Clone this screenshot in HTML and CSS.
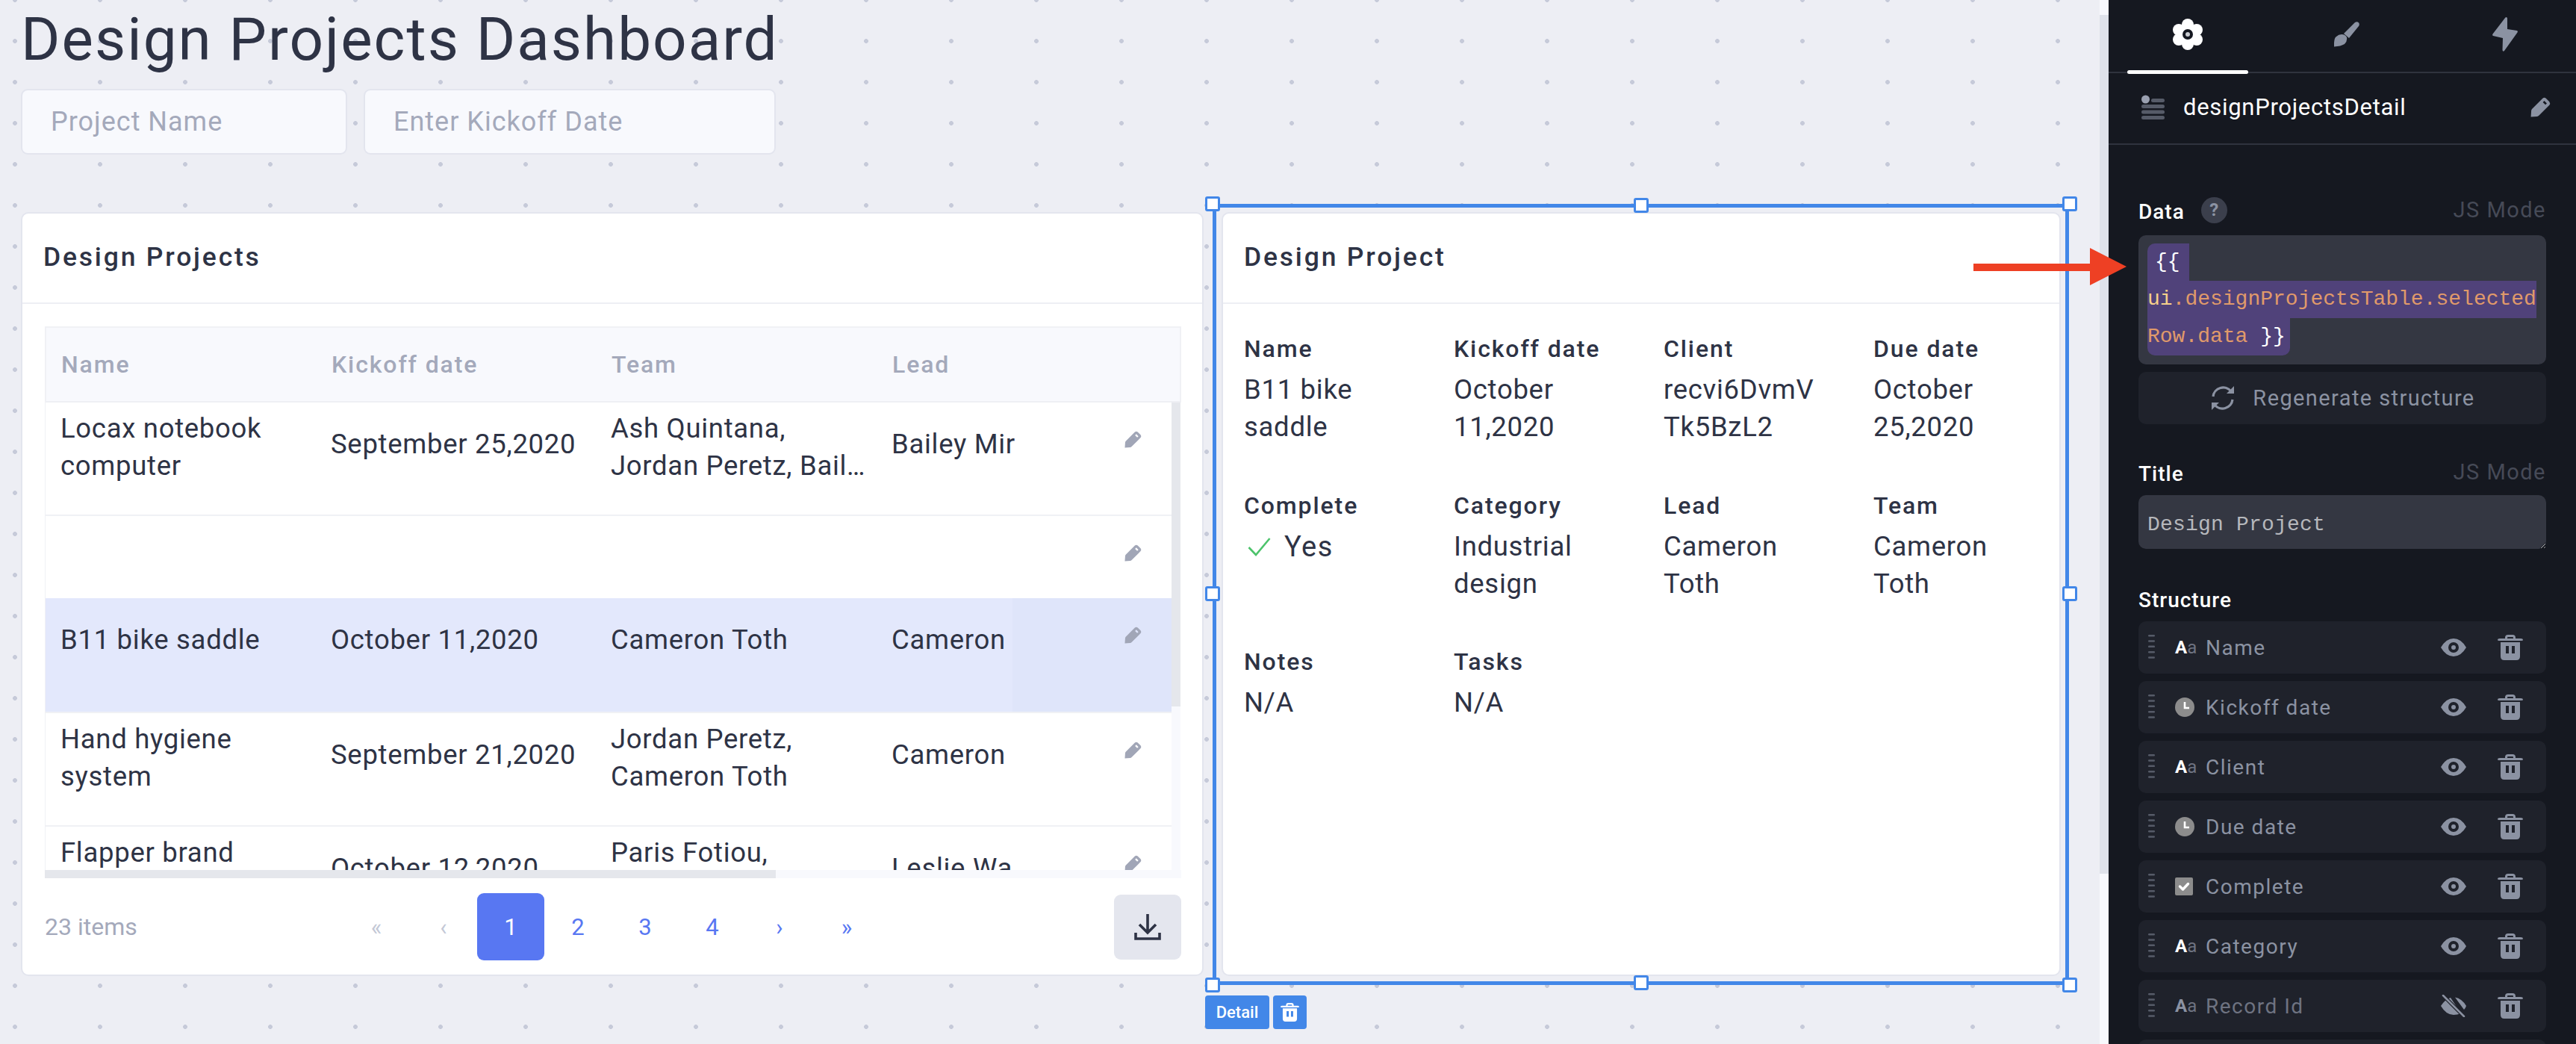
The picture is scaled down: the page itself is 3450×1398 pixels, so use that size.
FILE: index.html
```html
<!DOCTYPE html>
<html lang="en">
<head>
  <meta charset="UTF-8">
  <title>Design Projects Dashboard</title>
  <link rel="stylesheet" href="styles.css">
</head>
<body>

<svg class="defs" width="0" height="0">
  <symbol id="pencil" viewBox="0 0 24 24">
    <path fill-rule="evenodd" d="M0.5 23.5 L1 16 Q1 15 2 14 L14.5 1.5 Q16.5 0 18.5 1.5 L22.5 5.5 Q24 7.5 22.5 9.5 L10 22 Q9 23 8 23 Z M16.5 4.5 L14.8 6.2 L17.8 9.2 L19.5 7.5 Z"/>
  </symbol>
  <symbol id="trash" viewBox="0 0 34 34">
    <path fill-rule="evenodd" d="M10 5 V4 Q10 0 14 0 H20 Q24 0 24 4 V5 H31 Q34 5 34 7 Q34 8 32 8 H2 Q0 8 0 7 Q0 5 3 5 Z M13 5 H21 V4 Q21 3 20 3 H14 Q13 3 13 4 Z M4 10 H30 V29 Q30 34 25 34 H9 Q4 34 4 29 Z M11 15 V25 H15 V15 Z M19 15 V25 H23 V15 Z"/>
  </symbol>
  <symbol id="eye" viewBox="0 0 34 24">
    <path fill-rule="evenodd" d="M0 12 Q7 0 17 0 Q27 0 34 12 Q27 24 17 24 Q7 24 0 12 Z M17 5 A7 7 0 1 0 17 19 A7 7 0 1 0 17 5 Z M17 9 A3 3 0 1 1 17 15 A3 3 0 1 1 17 9 Z"/>
  </symbol>
  <symbol id="eye-off" viewBox="0 0 34 30">
    <path d="M0 15 Q6 6 13 4 L27 25 Q22 27 17 27 Q7 27 0 15 Z M19 3.500 Q28 5 34 15 Q33 18 31 20 Z"/>
    <path d="M3 1 L31 29" stroke="#1f222b" stroke-width="5"/>
    <path d="M3 1 L31 29" stroke="currentColor" stroke-width="2.500" stroke-linecap="round"/>
  </symbol>
  <symbol id="grip" viewBox="0 0 9 34">
    <rect x="0" y="0" width="9" height="2.500" rx="1.200"/>
    <rect x="0" y="7.300" width="9" height="2.500" rx="1.200"/>
    <rect x="0" y="14.600" width="9" height="2.500" rx="1.200"/>
    <rect x="0" y="21.900" width="9" height="2.500" rx="1.200"/>
    <rect x="0" y="29.200" width="9" height="2.500" rx="1.200"/>
  </symbol>
  <symbol id="clock" viewBox="0 0 26 26">
    <circle cx="13" cy="13" r="13" fill="#8c8c8c"/>
    <path d="M13 6 V14 H19" fill="none" stroke="#fff" stroke-width="2.600"/>
  </symbol>
  <symbol id="checkbox" viewBox="0 0 24 24">
    <rect width="24" height="24" rx="2" fill="#8c8c8c"/>
    <path d="M6.500 12 L10.500 16 L17.500 8.500" fill="none" stroke="#fff" stroke-width="3.400" stroke-linecap="round" stroke-linejoin="round"/>
  </symbol>
</svg>

<div class="app">
  <main class="canvas">
    <h1 class="page-title">Design Projects Dashboard</h1>
    <div class="filters">
      <input class="filter filter-name" placeholder="Project Name">
      <input class="filter filter-date" placeholder="Enter Kickoff Date">
    </div>

    <div class="cards">
      <!-- Table card -->
      <section class="card card-table">
        <div class="card-head"><h2>Design Projects</h2></div>
        <div class="card-body">
          <div class="table">
            <div class="row-grid table-head">
              <div class="cell">Name</div>
              <div class="cell">Kickoff date</div>
              <div class="cell">Team</div>
              <div class="cell">Lead</div>
            </div>
            <div class="table-scroll">
              <div class="rows">
                <div class="row-grid row row-tall">
                  <div class="cell">Locax notebook computer</div>
                  <div class="cell single">September 25,2020</div>
                  <div class="cell"><span class="line">Ash Quintana,</span><span class="line">Jordan Peretz, Bailey Mir</span></div>
                  <div class="cell single nowrap fits">Bailey Mir</div>
                  <div class="cell-edit"><svg class="icon-edit"><use href="#pencil"/></svg></div>
                </div>
                <div class="row-grid row row-empty">
                  <div class="cell"></div>
                  <div class="cell"></div>
                  <div class="cell"></div>
                  <div class="cell"></div>
                  <div class="cell-edit"><svg class="icon-edit"><use href="#pencil"/></svg></div>
                </div>
                <div class="row-grid row row-selected">
                  <div class="cell single">B11 bike saddle</div>
                  <div class="cell single">October 11,2020</div>
                  <div class="cell single">Cameron Toth</div>
                  <div class="cell single nowrap">Cameron Toth</div>
                  <div class="cell-edit"><svg class="icon-edit"><use href="#pencil"/></svg></div>
                </div>
                <div class="row-grid row row-tall">
                  <div class="cell">Hand hygiene system</div>
                  <div class="cell single">September 21,2020</div>
                  <div class="cell"><span class="line">Jordan Peretz,</span><span class="line">Cameron Toth</span></div>
                  <div class="cell single nowrap">Cameron Toth</div>
                  <div class="cell-edit"><svg class="icon-edit"><use href="#pencil"/></svg></div>
                </div>
                <div class="row-grid row row-tall">
                  <div class="cell">Flapper brand identity</div>
                  <div class="cell single">October 12,2020</div>
                  <div class="cell"><span class="line">Paris Fotiou,</span><span class="line">Leslie Wang</span></div>
                  <div class="cell single nowrap">Leslie Wang</div>
                  <div class="cell-edit"><svg class="icon-edit"><use href="#pencil"/></svg></div>
                </div>
              </div>
              <div class="vscroll"><div class="vscroll-thumb"></div></div>
            </div>
            <div class="hscroll"><div class="hscroll-thumb"></div></div>
          </div>

          <div class="table-foot">
            <div class="count">23 items</div>
            <div class="pager">
              <span class="page disabled">«</span>
              <span class="page disabled">‹</span>
              <span class="page active">1</span>
              <span class="page">2</span>
              <span class="page">3</span>
              <span class="page">4</span>
              <span class="page">›</span>
              <span class="page">»</span>
            </div>
            <div class="download">
              <svg width="38" height="38" viewBox="0 0 38 38" fill="none" stroke="#2e3345" stroke-width="3.600">
                <path d="M19 2 V26 M8 16 L19 27 L30 16"/>
                <path d="M3 27 V35 H35 V27"/>
              </svg>
            </div>
          </div>
        </div>
      </section>

      <!-- Detail card with selection frame -->
      <div class="selected-wrap">
        <section class="card card-detail">
          <div class="card-head"><h2>Design Project</h2></div>
          <div class="detail-grid">
            <div class="field"><div class="field-label">Name</div><div class="field-value">B11 bike saddle</div></div>
            <div class="field"><div class="field-label">Kickoff date</div><div class="field-value">October 11,2020</div></div>
            <div class="field"><div class="field-label">Client</div><div class="field-value break">recvi6DvmVTk5BzL2</div></div>
            <div class="field"><div class="field-label">Due date</div><div class="field-value">October 25,2020</div></div>
            <div class="field"><div class="field-label">Complete</div><div class="field-value value-check">
              <svg width="31" height="26" viewBox="0 0 31 26" fill="none" stroke="#4cc36b" stroke-width="2.600"><path d="M1.500 14 L11 24 L29.500 2"/></svg>
              <span>Yes</span>
            </div></div>
            <div class="field"><div class="field-label">Category</div><div class="field-value">Industrial design</div></div>
            <div class="field"><div class="field-label">Lead</div><div class="field-value">Cameron Toth</div></div>
            <div class="field"><div class="field-label">Team</div><div class="field-value">Cameron Toth</div></div>
            <div class="field"><div class="field-label">Notes</div><div class="field-value">N/A</div></div>
            <div class="field"><div class="field-label">Tasks</div><div class="field-value">N/A</div></div>
          </div>
        </section>
        <div class="frame">
          <span class="handle h-tl"></span>
          <span class="handle h-tm"></span>
          <span class="handle h-tr"></span>
          <span class="handle h-ml"></span>
          <span class="handle h-mr"></span>
          <span class="handle h-bl"></span>
          <span class="handle h-bm"></span>
          <span class="handle h-br"></span>
        </div>
        <div class="frame-tags">
          <span class="tag">Detail</span>
          <span class="tag tag-trash"><svg width="25" height="25"><use href="#trash"/></svg></span>
        </div>
      </div>
    </div>
  </main>

  <div class="canvas-scroll"><div class="canvas-thumb"></div></div>

  <aside class="panel">
    <div class="tabs">
      <div class="tab active">
        <svg width="42" height="42" viewBox="0 0 42 42">
          <g fill="#fff">
            <circle cx="21" cy="8" r="8"/><circle cx="33" cy="15" r="8"/><circle cx="33" cy="28" r="8"/>
            <circle cx="21" cy="34" r="8"/><circle cx="9" cy="28" r="8"/><circle cx="9" cy="15" r="8"/>
            <circle cx="21" cy="21" r="14"/>
          </g>
          <circle cx="21" cy="21" r="7" fill="#151820"/>
          <circle cx="21" cy="21" r="3" fill="#c9cbd0"/>
        </svg>
      </div>
      <div class="tab">
        <svg width="34" height="34" viewBox="0 0 34 34" fill="#8b92a2">
          <path d="M28 1 Q31 -0.500 33 1.500 Q34.500 3.500 33 6 L20 22 L13 16 Z"/>
          <path d="M10 17 Q15 17 17 21 Q18 26 14 30 Q9 33 0 33.500 Q-0.500 22 3 20 Q6 17 10 17 Z"/>
        </svg>
      </div>
      <div class="tab">
        <svg width="34" height="46" viewBox="0 0 34 46" fill="#8b92a2">
          <path d="M17 1 Q19 -1 20 1.500 L20 16 L33 18 Q34.500 18.500 33.500 20.500 L16 45 Q14 47 13.500 44 L14 28 L1 25 Q-0.500 24.500 0.500 22.500 Z"/>
        </svg>
      </div>
    </div>

    <div class="comp-head">
      <svg width="31" height="33" viewBox="0 0 31 33">
        <circle cx="5.500" cy="6" r="5.500" fill="#9aa0b0"/>
        <g fill="#565b68">
          <rect x="13" y="5" width="18" height="5" rx="2.500"/>
          <rect y="13" width="31" height="5" rx="2.500"/>
          <rect y="20.500" width="31" height="5" rx="2.500"/>
          <rect y="28" width="31" height="5" rx="2.500"/>
        </g>
      </svg>
      <span class="comp-name">designProjectsDetail</span>
      <svg class="comp-edit"><use href="#pencil"/></svg>
    </div>

    <div class="panel-body">
      <div class="label-row">
        <div class="label-left"><span class="panel-label">Data</span><span class="help">?</span></div>
        <span class="js-mode">JS Mode</span>
      </div>
      <div class="code-box">
        <div class="hl hl-first"><span class="c-brace">{{</span></div>
        <div class="hl hl-mid"><span class="c-ui">ui</span><span class="c-prop">.designProjectsTable.selected</span></div>
        <div class="hl hl-last"><span class="c-prop">Row.data</span> <span class="c-brace">}}</span></div>
      </div>
      <div class="regen">
        <svg width="36" height="36" viewBox="0 0 36 36" fill="none" stroke="#8b92a2" stroke-width="3.200">
          <path d="M5 16 A13.500 13.500 0 0 1 29 9"/>
          <path d="M31 20 A13.500 13.500 0 0 1 7 27"/>
          <path d="M33 2 V12 H23" fill="#8b92a2" stroke="none"/>
          <path d="M3 34 V24 H13" fill="#8b92a2" stroke="none"/>
        </svg>
        <span>Regenerate structure</span>
      </div>

      <div class="label-row label-title">
        <span class="panel-label">Title</span>
        <span class="js-mode">JS Mode</span>
      </div>
      <textarea class="title-input" rows="1">Design Project</textarea>

      <div class="label-row label-structure"><span class="panel-label">Structure</span></div>
      <div class="struct-list">
        <div class="struct-item">
          <svg class="grip"><use href="#grip"/></svg>
          <span class="type-aa"><b>A</b>a</span>
          <span class="struct-name">Name</span>
          <svg class="eye"><use href="#eye"/></svg>
          <svg class="bin"><use href="#trash"/></svg>
        </div>
        <div class="struct-item">
          <svg class="grip"><use href="#grip"/></svg>
          <span class="type-icon"><svg width="26" height="26"><use href="#clock"/></svg></span>
          <span class="struct-name">Kickoff date</span>
          <svg class="eye"><use href="#eye"/></svg>
          <svg class="bin"><use href="#trash"/></svg>
        </div>
        <div class="struct-item">
          <svg class="grip"><use href="#grip"/></svg>
          <span class="type-aa"><b>A</b>a</span>
          <span class="struct-name">Client</span>
          <svg class="eye"><use href="#eye"/></svg>
          <svg class="bin"><use href="#trash"/></svg>
        </div>
        <div class="struct-item">
          <svg class="grip"><use href="#grip"/></svg>
          <span class="type-icon"><svg width="26" height="26"><use href="#clock"/></svg></span>
          <span class="struct-name">Due date</span>
          <svg class="eye"><use href="#eye"/></svg>
          <svg class="bin"><use href="#trash"/></svg>
        </div>
        <div class="struct-item">
          <svg class="grip"><use href="#grip"/></svg>
          <span class="type-icon"><svg width="24" height="24"><use href="#checkbox"/></svg></span>
          <span class="struct-name">Complete</span>
          <svg class="eye"><use href="#eye"/></svg>
          <svg class="bin"><use href="#trash"/></svg>
        </div>
        <div class="struct-item">
          <svg class="grip"><use href="#grip"/></svg>
          <span class="type-aa"><b>A</b>a</span>
          <span class="struct-name">Category</span>
          <svg class="eye"><use href="#eye"/></svg>
          <svg class="bin"><use href="#trash"/></svg>
        </div>
        <div class="struct-item item-hidden">
          <svg class="grip"><use href="#grip"/></svg>
          <span class="type-aa"><b>A</b>a</span>
          <span class="struct-name">Record Id</span>
          <svg class="eye-off"><use href="#eye-off"/></svg>
          <svg class="bin"><use href="#trash"/></svg>
        </div>
        <div class="struct-item"></div>
      </div>
    </div>
  </aside>

  <svg class="arrow" width="205" height="50" viewBox="0 0 205 50">
    <polygon fill="#ee4024" points="0,21 156,21 156,0 205,25 156,50 156,31 0,31"/>
  </svg>
</div>

</body>
</html>
```

FILE: styles.css
```css
* {
  box-sizing: border-box;
  margin: 0;
  padding: 0;
}
html, body {
  width: 3450px;
  height: 1398px;
  overflow: hidden;
}
body {
  font-family: Roboto, "Liberation Sans", sans-serif;
  color: #2e3345;
}
.defs {
  position: absolute;
}
.app {
  position: relative;
  display: flex;
  height: 1398px;
}

/* canvas */
.canvas {
  width: 2812px;
  padding: 3px 0 0 28px;
  background-color: #edeef4;
  background-image: radial-gradient(circle at 20px 27px, #c6cad9 2.6px, transparent 3.2px);
  background-size: 114px 55px;
  background-position: 0 -27px;
}
.page-title {
  font-size: 80px;
  font-weight: 400;
  line-height: 100px;
  letter-spacing: 2px;
  white-space: nowrap;
}
.filters {
  display: flex;
  gap: 22px;
  margin-top: 16px;
}
.filter {
  height: 88px;
  padding-left: 38px;
  border: 2px solid #e3e5ee;
  border-radius: 9px;
  background-color: #f8f9fd;
  font-family: inherit;
  font-size: 36px;
  letter-spacing: 1px;
  color: #2e3345;
}
.filter::placeholder {
  color: #a4a9bb;
  opacity: 1;
}
.filter-name {
  width: 437px;
}
.filter-date {
  width: 552px;
}
.canvas-scroll {
  width: 12px;
  padding-top: 20px;
  background-color: #f7f8fc;
}
.canvas-thumb {
  height: 1150px;
  background-color: #dfe2ea;
}

/* cards */
.cards {
  display: flex;
  gap: 24px;
  margin-top: 77px;
}
.card {
  height: 1023px;
  border: 2px solid #e3e5ee;
  border-radius: 10px;
  background-color: #fff;
}
.card-table {
  width: 1584px;
}
.card-head {
  height: 121px;
  padding: 0 0 3px 28px;
  display: flex;
  align-items: center;
  border-bottom: 2px solid #eeeff4;
}
.card-head h2 {
  font-size: 35.500px;
  font-weight: 500;
  letter-spacing: 2.800px;
}
.card-body {
  padding: 30px 28px 0 30px;
}

/* table */
.table {
  border-top: 2px solid #f0f1f5;
}
.row-grid {
  display: grid;
  grid-template-columns: 362px 375px 376px 182px 214px;
  width: 1509px;
}
.table-head {
  width: 100%;
  height: 100px;
  align-items: center;
  background-color: #f8f9fd;
  border-bottom: 2px solid #eeeff4;
  border-left: 2px solid #f0f1f5;
  border-right: 2px solid #f0f1f5;
  font-size: 32px;
  font-weight: 500;
  letter-spacing: 1.900px;
  color: #a4a9bb;
}
.cell {
  padding-left: 20px;
  overflow: hidden;
}
.table-scroll {
  position: relative;
  display: flex;
  height: 626px;
  overflow: hidden;
}
.rows {
  width: 1509px;
  border-left: 1px solid #f0f1f5;
}
.row {
  align-items: start;
  border-bottom: 2px solid #f0f1f5;
  font-size: 36.500px;
  line-height: 50px;
  letter-spacing: 0.700px;
}
.row .cell {
  display: flex;
  flex-direction: column;
  justify-content: center;
  height: 120px;
}
.row .cell.single {
  height: 112px;
}
.row .cell.fits {
  overflow: visible;
}
.row-tall {
  height: 152px;
}
.row-empty {
  height: 110px;
  border-bottom: 0;
}
.row-selected {
  height: 154px;
  background-color: #e3e8fc;
}
.row-selected .cell-edit {
  background-color: #dfe5fa;
}
.nowrap {
  white-space: nowrap;
}
.line {
  display: block;
  width: 345px;
  white-space: nowrap;
  overflow: hidden;
  text-overflow: ellipsis;
}
.cell-edit {
  height: 100%;
  padding: 38px 41px 0 0;
  display: flex;
  justify-content: flex-end;
}
.icon-edit {
  width: 23px;
  height: 23px;
  fill: #a1a6b7;
}
.vscroll {
  width: 12px;
  background-color: #f8f9fd;
}
.vscroll-thumb {
  height: 407px;
  background-color: #e5e7ec;
}
.hscroll {
  height: 11px;
  background-color: #f8f9fd;
}
.hscroll-thumb {
  width: 979px;
  height: 11px;
  background-color: #e5e7ec;
}

/* pagination */
.table-foot {
  display: flex;
  align-items: center;
  height: 130px;
}
.count {
  width: 399px;
  font-size: 32px;
  color: #a4a9bb;
}
.pager {
  display: flex;
}
.page {
  display: flex;
  align-items: center;
  justify-content: center;
  width: 90px;
  height: 90px;
  border-radius: 9px;
  font-size: 31px;
  color: #5877f2;
}
.page.disabled {
  color: #c3c8d6;
}
.page.active {
  background-color: #5877f2;
  color: #fff;
}
.download {
  display: flex;
  align-items: center;
  justify-content: center;
  width: 90px;
  height: 87px;
  margin-left: auto;
  border-radius: 9px;
  background-color: #e4e6ee;
}

/* detail card */
.selected-wrap {
  position: relative;
  width: 1124px;
}
.detail-grid {
  display: grid;
  grid-template-columns: repeat(4, 281px);
  grid-auto-rows: 209.5px;
  padding: 38px 0 0 28px;
}
.field-label {
  height: 44px;
  margin-bottom: 8px;
  font-size: 32px;
  font-weight: 500;
  line-height: 44px;
  letter-spacing: 1.900px;
}
.field-value {
  max-width: 225px;
  font-size: 36.500px;
  line-height: 50px;
  letter-spacing: 0.700px;
}
.break {
  max-width: 218px;
  word-break: break-all;
}
.value-check {
  display: flex;
  align-items: center;
  gap: 18px;
  padding-left: 5px;
  font-size: 38px;
  letter-spacing: 1.500px;
}

/* selection frame */
.frame {
  position: absolute;
  top: -11px;
  right: -11px;
  bottom: -12px;
  left: -12px;
  border: 5px solid #4287e8;
}
.handle {
  position: absolute;
  width: 20px;
  height: 20px;
  border: 3px solid #4287e8;
  border-radius: 3px;
  background-color: #fff;
}
.h-tl { top: -15px; left: -15px; }
.h-tm { top: -13px; left: 559px; }
.h-tr { top: -15px; right: -16px; }
.h-ml { top: 507px; left: -15px; }
.h-mr { top: 507px; right: -16px; }
.h-bl { bottom: -15px; left: -15px; }
.h-bm { bottom: -12px; left: 559px; }
.h-br { bottom: -15px; right: -16px; }
.frame-tags {
  position: absolute;
  top: 1049px;
  left: -22px;
  display: flex;
  gap: 5px;
}
.tag {
  display: flex;
  align-items: center;
  justify-content: center;
  width: 86px;
  height: 45px;
  border-radius: 4px;
  background-color: #4287e8;
  font-size: 22px;
  font-weight: 500;
  color: #fff;
}
.tag-trash {
  width: 45px;
  fill: #fff;
}

/* property panel */
.panel {
  width: 626px;
  overflow: hidden;
  background-color: #151820;
  color: #fff;
}
.tabs {
  display: grid;
  grid-template-columns: repeat(3, 212.5px);
  height: 98px;
  border-bottom: 2px solid #2f333e;
}
.tab {
  position: relative;
  display: flex;
  align-items: center;
  justify-content: center;
  height: 96px;
  padding-bottom: 4px;
}
.tab.active::after {
  content: "";
  position: absolute;
  left: 25px;
  bottom: -3px;
  width: 162px;
  height: 5px;
  border-radius: 3px;
  background-color: #fff;
}
.comp-head {
  display: flex;
  align-items: center;
  gap: 25px;
  height: 96px;
  padding: 0 34px 4px 44px;
  border-bottom: 2px solid #2f333e;
}
.comp-name {
  font-size: 31px;
  letter-spacing: 0.7px;
}
.comp-edit {
  width: 27px;
  height: 27px;
  margin-left: auto;
  fill: #8b92a2;
}
.panel-body {
  padding: 69px 40px 0;
}
.label-row {
  display: flex;
  align-items: center;
  justify-content: space-between;
  height: 40px;
  margin-bottom: 12px;
}
.label-left {
  display: flex;
  align-items: center;
  gap: 22px;
}
.panel-label {
  font-size: 28px;
  font-weight: 500;
  letter-spacing: 1px;
}
.help {
  display: flex;
  align-items: center;
  justify-content: center;
  width: 35px;
  height: 35px;
  margin-top: -4px;
  border-radius: 50%;
  background-color: #3b3f4c;
  font-size: 24px;
  font-weight: 700;
  color: #8c93a3;
}
.js-mode {
  margin-bottom: 5px;
  font-size: 29px;
  letter-spacing: 1.500px;
  color: #464a57;
}
.code-box {
  height: 173px;
  padding: 11px 12px;
  border-radius: 10px;
  background-color: #343742;
  font-family: "Liberation Mono", monospace;
  font-size: 28px;
  line-height: 50px;
}
.hl {
  width: fit-content;
  height: 50px;
  background-color: #50427a;
  white-space: pre;
}
.hl-first {
  padding: 0 12px 0 10px;
  border-radius: 10px 0 0 0;
}
.hl-last {
  padding-right: 6px;
  border-radius: 0 0 10px 10px;
}
.c-brace {
  color: #fff;
}
.c-ui {
  color: #f5d08a;
}
.c-prop {
  color: #e09a6a;
}
.regen {
  display: flex;
  align-items: center;
  justify-content: center;
  gap: 22px;
  height: 70px;
  margin-top: 10px;
  border-radius: 10px;
  background-color: #1f222b;
  font-size: 29px;
  letter-spacing: 1.400px;
  color: #8b92a2;
}
.label-title {
  margin-top: 46px;
  margin-bottom: 9px;
}
.title-input {
  display: block;
  width: 100%;
  height: 72px;
  padding: 24px 12px 0;
  border: 0;
  border-radius: 10px;
  background-color: #343742;
  font-family: "Liberation Mono", monospace;
  font-size: 28px;
  line-height: 32px;
  letter-spacing: 0.200px;
  color: #b6b8bc;
  resize: vertical;
}
.label-structure {
  margin-top: 48px;
  margin-bottom: 9px;
}
.struct-list {
  display: flex;
  flex-direction: column;
  gap: 10px;
}
.struct-item {
  flex: none;
  display: flex;
  align-items: center;
  height: 70px;
  padding-left: 13px;
  border-radius: 10px;
  background-color: #1f222b;
  color: #8b92a2;
}
.grip {
  width: 9px;
  height: 34px;
  margin-right: 27px;
  fill: #565b68;
}
.type-aa {
  width: 26px;
  font-size: 24px;
  color: #6e7381;
}
.type-aa b {
  font-weight: 700;
  color: #fff;
}
.type-icon {
  display: flex;
  width: 26px;
}
.struct-name {
  margin-left: 15px;
  font-size: 28px;
  letter-spacing: 1.500px;
}
.eye,
.eye-off {
  width: 34px;
  height: 24px;
  margin-left: auto;
  margin-right: 42px;
  fill: #8b92a2;
  color: #8b92a2;
}
.eye-off {
  height: 30px;
}
.bin {
  width: 34px;
  height: 34px;
  margin-right: 31px;
  fill: #8b92a2;
}
.item-hidden .struct-name {
  color: #6e7381;
}
.item-hidden .type-aa b {
  color: #8b92a2;
}

.arrow {
  position: absolute;
  top: 332px;
  left: 2643px;
}
```
